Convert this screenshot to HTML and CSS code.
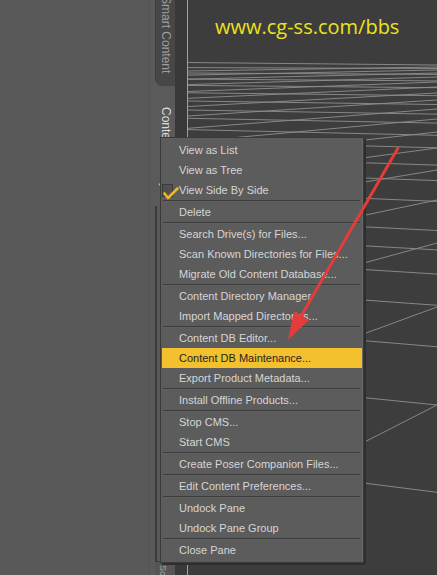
FILE: index.html
```html
<!DOCTYPE html>
<html>
<head>
<meta charset="utf-8">
<link rel="stylesheet" href="styles.css">
</head>
<body>
<div class="app">
  <div class="left-panel"></div>
  <div class="tabstrip">
    <div class="tab tab-smart"><span>Smart Content</span></div>
    <div class="tab tab-content"><span>Content Library</span></div>
    <div class="tab-body"></div>
    <div class="tab tab-bottom"><span>Scene</span></div>
  </div>
  <div class="dock-gap"></div>
  <div class="viewport">
    <svg class="grid" viewBox="188 0 249 575" width="249" height="575" xmlns="http://www.w3.org/2000/svg">
      <g stroke="#8e8e8e" stroke-width="0.9" fill="none">
        <line x1="188" y1="460.8" x2="437" y2="492.3"/>
        <line x1="188" y1="379.8" x2="437" y2="405"/>
        <line x1="188" y1="325.8" x2="437" y2="346.8"/>
        <line x1="188" y1="287.3" x2="437" y2="305.3"/>
        <line x1="188" y1="258.4" x2="437" y2="274.1"/>
        <line x1="188" y1="235.9" x2="437" y2="249.9"/>
        <line x1="188" y1="217.9" x2="437" y2="230.5"/>
        <line x1="188" y1="190.9" x2="437" y2="201.4"/>
        <line x1="188" y1="171.6" x2="437" y2="180.6"/>
        <line x1="188" y1="157.2" x2="437" y2="165.1"/>
        <line x1="188" y1="141.2" x2="437" y2="147.8"/>
        <line x1="188" y1="129.6" x2="437" y2="135.3"/>
        <line x1="188" y1="118.3" x2="437" y2="123.1"/>
        <line x1="188" y1="110" x2="437" y2="114.2"/>
        <line x1="188" y1="101" x2="437" y2="104.5"/>
        <line x1="188" y1="92.8" x2="437" y2="95.7"/>
        <line x1="188" y1="85.4" x2="437" y2="87.7"/>
        <line x1="188" y1="79.1" x2="437" y2="80.9"/>
        <line x1="188" y1="73" x2="437" y2="74.4"/>
        <line x1="188" y1="67.6" x2="437" y2="68.5"/>
        <line x1="188" y1="62.5" x2="437" y2="65"/>

        <line x1="188" y1="532" x2="437" y2="405"/>
        <line x1="188" y1="398.4" x2="437" y2="307"/>
        <line x1="188" y1="311.1" x2="437" y2="243"/>
        <line x1="188" y1="252.4" x2="437" y2="200"/>
        <line x1="188" y1="211.5" x2="437" y2="170"/>
        <line x1="188" y1="181.5" x2="437" y2="148"/>
        <line x1="188" y1="159.7" x2="437" y2="132"/>
        <line x1="188" y1="141.9" x2="437" y2="119"/>
        <line x1="188" y1="128.3" x2="437" y2="109"/>
        <line x1="188" y1="116" x2="437" y2="100"/>
        <line x1="188" y1="106.5" x2="437" y2="93"/>
        <line x1="188" y1="98.3" x2="437" y2="87"/>
        <line x1="188" y1="91.5" x2="437" y2="82"/>
        <line x1="188" y1="84.6" x2="437" y2="77"/>
        <line x1="188" y1="79.2" x2="437" y2="73"/>
        <line x1="188" y1="75.1" x2="437" y2="70"/>
        <line x1="188" y1="71" x2="437" y2="67"/>
      </g>
    </svg>
    <div class="watermark">www.cg-ss.com/bbs</div>
  </div>
</div>

<div class="context-menu">
  <div class="item"><span class="gutter"></span><span class="label">View as List</span></div>
  <div class="item"><span class="gutter"></span><span class="label">View as Tree</span></div>
  <div class="item"><span class="gutter"><span class="checkbox"><svg class="check" viewBox="0 0 16 14" width="16" height="14"><path d="M1.5 7.5 L5 12 L14.5 2.5" stroke="#e9b72c" stroke-width="2.6" fill="none" stroke-linecap="round" stroke-linejoin="round"/></svg></span></span><span class="label">View Side By Side</span></div>
  <div class="sep"></div>
  <div class="item"><span class="gutter"></span><span class="label">Delete</span></div>
  <div class="sep"></div>
  <div class="item"><span class="gutter"></span><span class="label">Search Drive(s) for Files...</span></div>
  <div class="item"><span class="gutter"></span><span class="label">Scan Known Directories for Files...</span></div>
  <div class="item"><span class="gutter"></span><span class="label">Migrate Old Content Database...</span></div>
  <div class="sep"></div>
  <div class="item"><span class="gutter"></span><span class="label">Content Directory Manager</span></div>
  <div class="item"><span class="gutter"></span><span class="label">Import Mapped Directories...</span></div>
  <div class="sep"></div>
  <div class="item"><span class="gutter"></span><span class="label">Content DB Editor...</span></div>
  <div class="item active"><span class="gutter"></span><span class="label">Content DB Maintenance...</span></div>
  <div class="item"><span class="gutter"></span><span class="label">Export Product Metadata...</span></div>
  <div class="sep"></div>
  <div class="item"><span class="gutter"></span><span class="label">Install Offline Products...</span></div>
  <div class="sep"></div>
  <div class="item"><span class="gutter"></span><span class="label">Stop CMS...</span></div>
  <div class="item"><span class="gutter"></span><span class="label">Start CMS</span></div>
  <div class="sep"></div>
  <div class="item"><span class="gutter"></span><span class="label">Create Poser Companion Files...</span></div>
  <div class="sep"></div>
  <div class="item"><span class="gutter"></span><span class="label">Edit Content Preferences...</span></div>
  <div class="sep"></div>
  <div class="item"><span class="gutter"></span><span class="label">Undock Pane</span></div>
  <div class="item"><span class="gutter"></span><span class="label">Undock Pane Group</span></div>
  <div class="sep"></div>
  <div class="item"><span class="gutter"></span><span class="label">Close Pane</span></div>
</div>

<svg class="arrow" viewBox="0 0 437 575" width="437" height="575" xmlns="http://www.w3.org/2000/svg">
  <line x1="398" y1="148" x2="300" y2="318" stroke="#e43b3b" stroke-width="3" stroke-linecap="round"/>
  <polygon points="288,340 309,320 294,311" fill="#e43b3b"/>
</svg>
</body>
</html>
```

FILE: styles.css
```css
html, body {
  margin: 0;
  padding: 0;
}
body {
  width: 437px;
  height: 575px;
  overflow: hidden;
  position: relative;
  background: #595959;
  font-family: "Liberation Sans", Arial, sans-serif;
}
.app {
  display: flex;
  width: 437px;
  height: 575px;
}
.left-panel {
  width: 149px;
  background: #595959;
  border-right: 1px solid #525252;
}
.tabstrip {
  width: 20px;
  padding-left: 5px;
  background: #5a5a5a;
  display: flex;
  flex-direction: column;
  overflow: hidden;
}
.tab {
  overflow: hidden;
  font-size: 12px;
  line-height: 14px;
}
.tab span {
  writing-mode: vertical-rl;
  white-space: nowrap;
  display: block;
  padding-left: 4px;
}
.tab-smart {
  height: 86px;
  background: #474747;
  border-left: 1px solid #3f3f3f;
  border-bottom-left-radius: 8px;
  color: #9e9e9e;
}
.tab-smart span {
  margin-top: -4px;
  padding-left: 3px;
}
.tab-content {
  height: 118px;
  margin-top: 2px;
  background: #5a5a5a;
  color: #dadada;
}
.tab-content span {
  padding-top: 19px;
}
.tab-body {
  flex: 1;
  border-left: 2px solid #3c3c3c;
  background: #595959;
}
.tab-bottom {
  height: 13px;
  border-top: 1px solid #3c3c3c;
  background: #555555;
  color: #a8a8a8;
}
.tab-bottom span {
  padding-top: 3px;
  padding-left: 1px;
  font-size: 9px;
}
.dock-gap {
  width: 12px;
  background: #393939;
}
.viewport {
  flex: 1;
  position: relative;
  background: #3d3d3d;
  border-left: 1px solid #c6a23e;
  overflow: hidden;
}
.grid {
  position: absolute;
  left: 0;
  top: 0;
}
.watermark {
  position: relative;
  padding: 13px 0 0 27px;
  font-family: "Open Sans", "DejaVu Sans", sans-serif;
  font-size: 20px;
  line-height: 28px;
  color: #eee21a;
  white-space: nowrap;
}
.context-menu {
  position: absolute;
  left: 160px;
  top: 137px;
  width: 204px;
  box-sizing: border-box;
  padding: 2px 1px;
  background: #5c5c5c;
  border: 1px solid #3a3a3a;
  box-shadow: 2px 2px 0 #2f2f2f, inset -1px 0 0 #676767;
  color: #d6d6d6;
  font-size: 11px;
}
.item {
  display: flex;
  align-items: center;
  height: 20px;
  line-height: 20px;
  white-space: nowrap;
}
.gutter {
  width: 17px;
  height: 20px;
  flex: none;
  display: flex;
  align-items: center;
}
.checkbox {
  position: relative;
  width: 11px;
  height: 13px;
  border: 1px solid #3c3c3c;
  background: #505050;
  box-sizing: border-box;
}
.check {
  position: absolute;
  left: 0px;
  top: 1px;
}
.item.active {
  background: #f3c02e;
  color: #1f1f1f;
}
.sep {
  height: 1px;
  margin: 0 2px 0 1px;
  background: #3b3b3b;
  border-bottom: 1px solid #616161;
}
.arrow {
  position: absolute;
  left: 0;
  top: 0;
  pointer-events: none;
}
```
